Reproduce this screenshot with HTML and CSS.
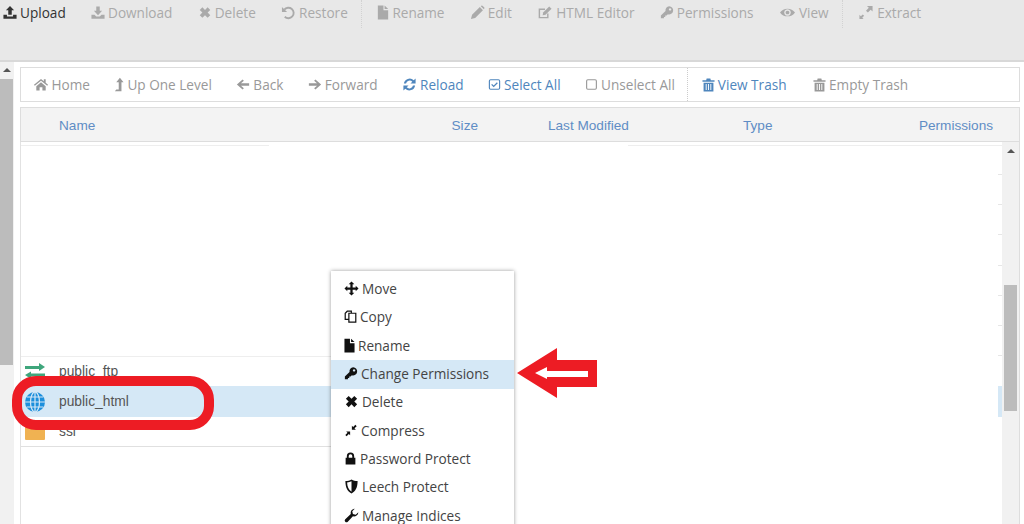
FILE: index.html
```html
<!DOCTYPE html>
<html lang="en">
<head>
<meta charset="utf-8">
<title>File Manager</title>
<link rel="stylesheet" href="styles.css">
</head>
<body>
<svg class="defs" aria-hidden="true">
  <symbol id="i-upload" viewBox="0 0 16 16"><path d="M8 .5 12.700 5.500H10V10.500H6V5.500H3.300ZM.5 10.500H4.500V12.500H11.500V10.500H15.500V15H.5Z"/></symbol>
  <symbol id="i-download" viewBox="0 0 16 16"><path d="M6 1H10V6H12.700L8 11 3.300 6H6ZM.5 10.500H4L6 12.500H10L12 10.500H15.500V15H.5Z"/></symbol>
  <symbol id="i-times" viewBox="0 0 16 16"><path d="M2 5 5 2 8 5 11 2 14 5 11 8 14 11 11 14 8 11 5 14 2 11 5 8Z"/></symbol>
  <symbol id="i-undo" viewBox="0 0 16 16"><path d="M1 2V7.500H6.500Z"/><path d="M3.500 5A5.600 5.600 0 1 1 4 12.500" fill="none" stroke="currentColor" stroke-width="2"/></symbol>
  <symbol id="i-file" viewBox="2 0 12 16"><path d="M2.500 .5H8.500V5.500H13.500V15.500H2.500ZM9.700.5 13.500 4.300H9.700Z"/></symbol>
  <symbol id="i-pencil" viewBox="0 0 16 16"><path d="M1 15 2.200 10.500 10.500 2.200 13.800 5.500 5.500 13.800ZM11.500 1.200C12.300.4 13 .4 13.800 1.200L14.800 2.200C15.600 3 15.600 3.700 14.800 4.500Z"/></symbol>
  <symbol id="i-edit" viewBox="0 0 16 16"><path d="M11 9V13.500H2V4.500H8" fill="none" stroke="currentColor" stroke-width="1.500"/><path d="M5.500 11 6 8 12.500 1.500 15 4 8.500 10.500Z"/></symbol>
  <symbol id="i-key" viewBox="0 0 16 16"><path fill-rule="evenodd" d="M10.500.8A4.700 4.700 0 1 1 9 10L7.500 11.500H6V13H4.500V14.500H1V11.500L6.300 6.200A4.700 4.700 0 0 1 10.500.8ZM11.500 3A1.400 1.400 0 1 0 11.510 3Z"/></symbol>
  <symbol id="i-eye" viewBox="0 0 16 16"><path fill-rule="evenodd" d="M0 8C3.500 2.500 12.500 2.500 16 8 12.500 13.500 3.500 13.500 0 8ZM8 4.500A3.500 3.500 0 1 0 8.010 4.500ZM8 6A2 2 0 1 1 7.990 6Z"/></symbol>
  <symbol id="i-extract" viewBox="0 0 16 16"><path d="M9 1H15V7L13 5 10 8 8 6 11 3ZM1 15V10.500L2.500 12 4.500 10 6 11.500 4 13.500 5.500 15Z"/></symbol>
  <symbol id="i-home" viewBox="0 0 16 16"><path d="M8 2 .5 8.300 1.400 9.400 8 3.900 14.600 9.400 15.500 8.300 13 6.200V2.500H11V4.500ZM3 9.800 8 5.600 13 9.800V14.500H9.500V10.800H6.500V14.500H3Z"/></symbol>
  <symbol id="i-up" viewBox="0 0 11 16"><path d="M6.500.5 10.500 5.500H8.200V15.500H1L2.500 13.500H5.200V5.500H2.500Z"/></symbol>
  <symbol id="i-left" viewBox="0 0 16 16"><path d="M7.500 2.300 1 8 7.500 13.700 9 12.300 5.700 9.300H15V6.700H5.700L9 3.700Z"/></symbol>
  <symbol id="i-right" viewBox="0 0 16 16"><path d="M8.500 2.300 15 8 8.500 13.700 7 12.300 10.300 9.300H1V6.700H10.300L7 3.700Z"/></symbol>
  <symbol id="i-reload" viewBox="0 0 16 16"><path d="M2 7A6.200 6.200 0 0 1 12.500 3.500L14.500 1.500V7H9L11 5A4 4 0 0 0 4.300 7ZM14 9A6.200 6.200 0 0 1 3.500 12.500L1.500 14.500V9H7L5 11A4 4 0 0 0 11.700 9Z"/></symbol>
  <symbol id="i-check" viewBox="0 0 16 16"><rect x="1.700" y="2.200" width="12.600" height="11.600" rx="1.500" fill="none" stroke="currentColor" stroke-width="1.400"/><path d="M4.500 7.800 7 10.300 11.500 5.800" fill="none" stroke="currentColor" stroke-width="1.600"/></symbol>
  <symbol id="i-square" viewBox="0 0 16 16"><rect x="2" y="2.200" width="12" height="11.600" rx="1.500" fill="none" stroke="currentColor" stroke-width="1.400"/></symbol>
  <symbol id="i-trash" viewBox="1 0 14 16"><path fill-rule="evenodd" d="M1.500 3.500H5.500L6 1.500H10L10.500 3.500H14.500V5H1.500ZM2.700 6H13.300V15.500H2.700ZM5 7.500V14H6V7.500ZM7.500 7.500V14H8.500V7.500ZM10 7.500V14H11V7.500Z"/></symbol>
  <symbol id="i-move" viewBox="0 0 16 16"><path d="M8 .5 11 3.500H9.200V6.800H12.500V5L15.500 8 12.500 11V9.200H9.200V12.500H11L8 15.500 5 12.500H6.800V9.200H3.500V11L.5 8 3.500 5V6.800H6.800V3.500H5Z"/></symbol>
  <symbol id="i-copy" viewBox="0 0 16 16"><path d="M5.500 11.500H1.500V4L4 1.500H9V4M6 4H14.500V14.800H6Z" fill="none" stroke="currentColor" stroke-width="1.500"/></symbol>
  <symbol id="i-compress" viewBox="0 0 16 16"><path d="M9 7V2.500L10.500 4 13 1.500 14.500 3 12 5.500 13.500 7ZM7 9V13.500L5.500 12 3 14.500 1.500 13 4 10.500 2.500 9Z"/></symbol>
  <symbol id="i-lock" viewBox="0 0 16 16"><path fill-rule="evenodd" d="M2 7H3.500V5A4.500 4.500 0 0 1 12.500 5V7H14V15.500H2ZM5.800 7H10.200V5A2.200 2.200 0 0 0 5.800 5Z"/></symbol>
  <symbol id="i-shield" viewBox="0 0 16 16"><path fill-rule="evenodd" d="M8 .5C10 1.800 12 2.200 14.500 2.200 14.500 9 12.500 13 8 15.500 3.500 13 1.500 9 1.500 2.200 4 2.200 6 1.800 8 .5ZM8 2.500C6.500 3.300 5 3.700 3.300 3.800 3.500 8.500 5 11.700 8 13.500Z"/></symbol>
  <symbol id="i-wrench" viewBox="0 0 16 16"><path d="M15.300 4.500A4.600 4.600 0 0 1 9.500 8.800L3.800 14.800A1.900 1.900 0 0 1 1.100 12.200L7.200 6.400A4.600 4.600 0 0 1 11.500.7L8.800 3.500 9.500 6.500 12.500 7.200Z"/></symbol>
  <symbol id="i-transfer" viewBox="0 0 20 16"><path d="M0 3H14V0L20 4 14 8V6H0ZM20 10.500H6V8.500L0 12 6 16V13.500H20Z"/></symbol>
  <symbol id="i-globe" viewBox="0 0 20 20"><circle cx="10" cy="10" r="10"/><g fill="none" stroke="#d6e8f6" stroke-width="1.200"><ellipse cx="10" cy="10" rx="4.500" ry="10"/><path d="M10 0V20M0 10H20M1.800 5H18.200M1.800 15H18.200"/></g></symbol>
</svg>

<header class="toolbar">
  <span class="tool tool-on"><svg class="ico w14"><use href="#i-upload"/></svg>Upload</span>
  <span class="tool"><svg class="ico w14"><use href="#i-download"/></svg>Download</span>
  <span class="tool"><svg class="ico w14"><use href="#i-times"/></svg>Delete</span>
  <span class="tool"><svg class="ico w15"><use href="#i-undo"/></svg>Restore</span>
  <span class="tool-sep"></span>
  <span class="tool"><svg class="ico w12"><use href="#i-file"/></svg>Rename</span>
  <span class="tool"><svg class="ico w15"><use href="#i-pencil"/></svg>Edit</span>
  <span class="tool"><svg class="ico w16"><use href="#i-edit"/></svg>HTML Editor</span>
  <span class="tool"><svg class="ico w14"><use href="#i-key"/></svg>Permissions</span>
  <span class="tool"><svg class="ico w17"><use href="#i-eye"/></svg>View</span>
  <span class="tool-sep"></span>
  <span class="tool"><svg class="ico w16"><use href="#i-extract"/></svg>Extract</span>
</header>

<div class="workspace">
  <aside class="side-scroll">
    <span class="scroll-arrow"></span>
    <span class="side-thumb"></span>
  </aside>

  <main class="panel">
    <nav class="navbar">
      <span class="nav-item"><svg class="ico w16"><use href="#i-home"/></svg>Home</span>
      <span class="nav-item"><svg class="ico w10"><use href="#i-up"/></svg>Up One Level</span>
      <span class="nav-item"><svg class="ico w14"><use href="#i-left"/></svg>Back</span>
      <span class="nav-item"><svg class="ico w14"><use href="#i-right"/></svg>Forward</span>
      <span class="nav-item nav-blue"><svg class="ico w15"><use href="#i-reload"/></svg>Reload</span>
      <span class="nav-item nav-blue"><svg class="ico w13"><use href="#i-check"/></svg>Select All</span>
      <span class="nav-item"><svg class="ico w13"><use href="#i-square"/></svg>Unselect All</span>
      <span class="nav-sep"></span>
      <span class="nav-item nav-blue"><svg class="ico w13"><use href="#i-trash"/></svg>View Trash</span>
      <span class="nav-item nav-last"><svg class="ico w13"><use href="#i-trash"/></svg>Empty Trash</span>
    </nav>

    <div class="thead">
      <span>Name</span>
      <span class="th-right">Size</span>
      <span class="th-mod">Last Modified</span>
      <span>Type</span>
      <span class="th-right">Permissions</span>
    </div>

    <section class="listing">
      <div class="rows">
        <div class="ghost-line"><span class="ghost-a"></span><span class="ghost-b"></span></div>
        <div class="blank"><span class="ticks"></span></div>
        <div class="row row-first"><svg class="row-ico ftp"><use href="#i-transfer"/></svg>public_ftp</div>
        <div class="row row-sel"><svg class="row-ico globe"><use href="#i-globe"/></svg>public_html</div>
        <div class="row row-last"><span class="folder"></span>ssi</div>
      </div>
      <div class="list-scroll">
        <span class="scroll-arrow"></span>
        <span class="list-thumb"></span>
      </div>
    </section>
  </main>
</div>

<ul class="menu">
  <li class="menu-item"><svg class="mico w15"><use href="#i-move"/></svg>Move</li>
  <li class="menu-item"><svg class="mico w13"><use href="#i-copy"/></svg>Copy</li>
  <li class="menu-item"><svg class="mico w11"><use href="#i-file"/></svg>Rename</li>
  <li class="menu-item menu-hover"><svg class="mico w14"><use href="#i-key"/></svg>Change Permissions</li>
  <li class="menu-item"><svg class="mico w15"><use href="#i-times"/></svg>Delete</li>
  <li class="menu-item"><svg class="mico w14"><use href="#i-compress"/></svg>Compress</li>
  <li class="menu-item"><svg class="mico w13"><use href="#i-lock"/></svg>Password Protect</li>
  <li class="menu-item"><svg class="mico w15"><use href="#i-shield"/></svg>Leech Protect</li>
  <li class="menu-item"><svg class="mico w15"><use href="#i-wrench"/></svg>Manage Indices</li>
</ul>

<span class="ring"></span>
<svg class="arrow" viewBox="0 0 82 52" aria-hidden="true">
  <path d="M1 26 41 1V13H81V40H41V51Z" fill="#ed1c24"/>
  <path d="M19 26 31 20V24H72V30H31V32Z" fill="#fff"/>
</svg>
</body>
</html>
```
FILE: styles.css
```css
* { box-sizing: border-box; }
html, body { margin: 0; height: 100%; }
body {
  position: relative;
  height: 524px;
  overflow: hidden;
  background: #fff;
  font-family: "Open Sans", "Liberation Sans", sans-serif;
  font-size: 13.600px;
  color: #555;
}
.defs { position: absolute; width: 0; height: 0; }
svg { fill: currentColor; }

.w10 { width: 10px; }
.w11 { width: 11px; }
.w12 { width: 12px; }
.w13 { width: 13px; }
.w14 { width: 14px; }
.w15 { width: 15px; }
.w16 { width: 16px; }
.w17 { width: 17px; }

.toolbar {
  display: flex;
  align-items: flex-start;
  gap: 25.300px;
  height: 62px;
  padding: 2px 0 0 3px;
  background: #e8e8e8;
  border-bottom: 2px solid #d8d8d8;
}
.tool {
  display: inline-flex;
  align-items: center;
  gap: 3px;
  height: 20px;
  color: #aaa;
  white-space: nowrap;
}
.tool-on { color: #333; }
.tool-sep {
  width: 1px;
  height: 28px;
  margin: -2px -10px 0 -12px;
  border-left: 1px dotted #d2d2d2;
}
.ico { height: 15px; flex: none; }

.workspace { display: flex; height: 462px; }
.side-scroll {
  display: flex;
  flex-direction: column;
  align-items: center;
  width: 14px;
  padding-top: 6px;
  background: #f1f1f1;
}
.scroll-arrow {
  width: 0;
  height: 0;
  border: 4px solid transparent;
  border-top: 0;
  border-bottom: 4px solid #555;
}
.side-thumb {
  width: 13px;
  height: 286px;
  margin: 7px 1px 0 0;
  background: #bcbcbc;
}

.panel {
  display: flex;
  flex-direction: column;
  gap: 5px;
  width: 1000px;
  margin: 5px 0 0 6px;
}
.navbar {
  display: flex;
  align-items: center;
  gap: 24.500px;
  height: 35px;
  padding: 0 0 0 11.500px;
  border: 1px solid #ddd;
  color: #999;
}
.nav-item {
  display: inline-flex;
  align-items: center;
  gap: 3px;
  white-space: nowrap;
}
.nav-blue { color: #4f86bd; }
.nav-last { margin-left: 2px; }
.nav-sep {
  align-self: stretch;
  width: 1px;
  margin: 0 -11px 0 -12px;
  border-left: 1px dotted #ccc;
}

.thead {
  display: grid;
  grid-template-columns: 359px 60px 265px 100px 150px;
  align-items: center;
  height: 35px;
  padding: 1px 0 0 38px;
  border: 1px solid #ddd;
  background: #f3f3f3;
  font-family: "Liberation Sans", Arial, sans-serif;
  color: #5f8dc5;
}
.th-right { text-align: right; }
.th-mod { padding-left: 70px; }

.listing {
  display: flex;
  flex: 1;
  margin-top: -5px;
  border-left: 1px solid #e2e2e2;
  border-right: 1px solid #ddd;
  font-family: "Liberation Sans", Arial, sans-serif;
}
.rows {
  display: flex;
  flex-direction: column;
  width: 981px;
}
.ghost-line {
  display: flex;
  justify-content: space-between;
  height: 4px;
}
.ghost-a { width: 248px; height: 1px; margin-top: 3px; background: #eee; }
.ghost-b { width: 374px; height: 1px; margin-top: 3px; background: #eee; }
.blank {
  display: flex;
  justify-content: flex-end;
  height: 210px;
}
.ticks {
  width: 4px;
  height: 100%;
  background: repeating-linear-gradient(#fff 0 28px, #e6e6e6 28px 29px, #fff 29px 30.200px);
}
.row {
  display: flex;
  align-items: center;
  height: 30.400px;
  padding-left: 4px;
  font-size: 13.800px;
  color: #555;
  white-space: nowrap;
}
.row-first {
  background: linear-gradient(#eee, #eee) top left / 320px 1px no-repeat;
}
.row-sel {
  background: linear-gradient(90deg, #d5e8f6 0 490px, #fff 490px 977px, #d5e8f6 977px);
}
.row-last {
  background: linear-gradient(#e0e0e0, #e0e0e0) bottom left / 320px 1px no-repeat;
}
.row-ico, .folder { flex: none; margin-right: 14px; }
.row-ico { width: 20px; height: 20px; }
.ftp { height: 16px; color: #3fa67c; }
.globe { color: #1c8fdc; }
.folder {
  width: 20px;
  height: 16px;
  background: #f0b252;
  border-radius: 1px;
}

.list-scroll {
  display: flex;
  flex-direction: column;
  align-items: center;
  flex: 1;
  padding-top: 7px;
  background: #f1f1f1;
}
.list-thumb {
  width: 13px;
  height: 126px;
  margin-top: 132px;
  background: #bcbcbc;
}

.menu {
  position: absolute;
  left: 331px;
  top: 271px;
  width: 183px;
  height: 270px;
  margin: 0;
  padding: 4.500px 0 0;
  list-style: none;
  background: #fff;
  box-shadow: 0 0 4px rgba(0, 0, 0, .4);
  color: #444;
}
.menu-item {
  display: flex;
  align-items: center;
  gap: 3px;
  height: 28.300px;
  padding: 0 0 2px 13px;
  white-space: nowrap;
}
.menu-hover { background: #d5e8f6; }
.mico { height: 15px; flex: none; color: #111; }

.ring {
  position: absolute;
  left: 12px;
  top: 376px;
  width: 202px;
  height: 54px;
  border: 10px solid #ed1c24;
  border-radius: 24px;
}
.arrow {
  position: absolute;
  left: 516px;
  top: 347px;
  width: 82px;
  height: 52px;
}
```
